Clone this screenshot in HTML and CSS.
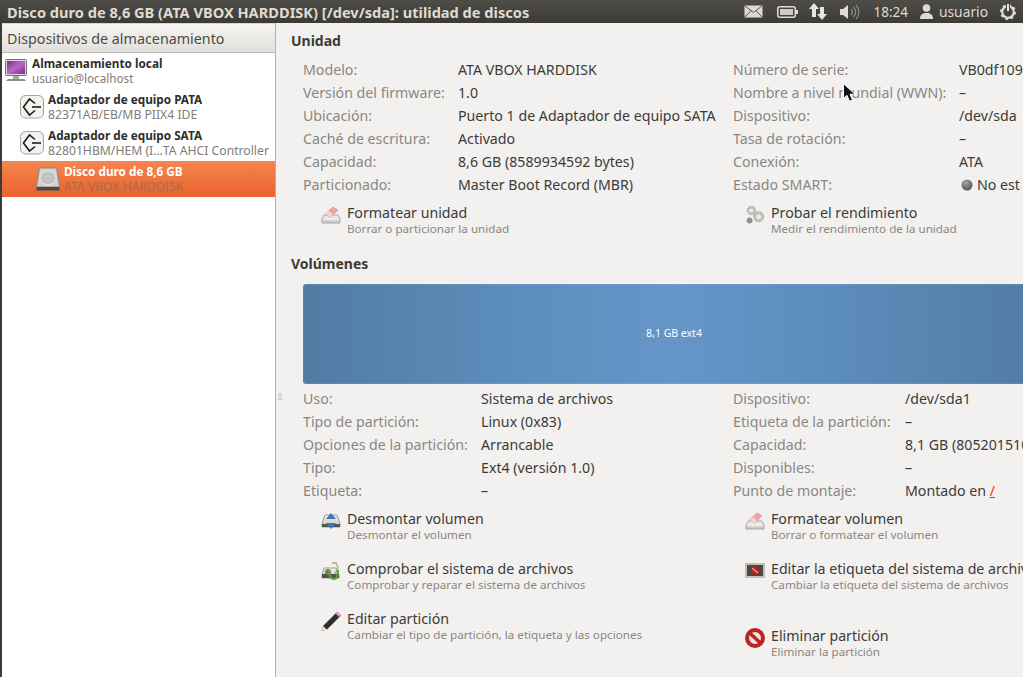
FILE: index.html
```html
<!DOCTYPE html>
<html lang="es">
<head>
<meta charset="utf-8">
<title>Utilidad de discos</title>
<link rel="stylesheet" href="styles.css">
</head>
<body>
<svg class="defs" width="0" height="0" aria-hidden="true">
  <defs>
    <linearGradient id="drive" x1="0" y1="0" x2="0" y2="1"><stop offset="0" stop-color="#f2f2f0"/><stop offset="1" stop-color="#c4c4c0"/></linearGradient>
    <linearGradient id="screen" x1="0" y1="0" x2="1" y2="1"><stop offset="0" stop-color="#7a2f8f"/><stop offset=".5" stop-color="#b868c4"/><stop offset="1" stop-color="#7c2f86"/></linearGradient>
    <radialGradient id="ball" cx=".4" cy=".3" r=".8"><stop offset="0" stop-color="#a5a5a3"/><stop offset="1" stop-color="#4c4c4a"/></radialGradient>
    <symbol id="adapter" viewBox="0 0 24 24">
      <rect x=".5" y=".5" width="23" height="22.500" rx="5" fill="#f3f2ef" stroke="#a3a19c"/>
      <path d="M15 8.500 9.500 4 3.500 12l6 8 5.500-4.500" fill="none" stroke="#1c1c1a" stroke-width="1.600"/>
      <path d="M12 12h9" fill="none" stroke="#1c1c1a" stroke-width="1.600"/>
    </symbol>
    <symbol id="erase" viewBox="0 0 20 20">
      <path d="M3 10h14l2 4v4H1v-4z" fill="url(#drive)" stroke="#a8a8a4"/>
      <path d="M2 14h16" stroke="#fff"/>
      <path d="M4 9l8-7 5 3-7 7z" fill="#eda5a5" stroke="#d78b8b" stroke-width=".6"/>
      <path d="M4 9l3-3 5 3-2 3z" fill="#f5d5d3"/>
    </symbol>
  </defs>
</svg>

<div class="app">
  <header class="topbar">
    <div class="win-title">Disco duro de 8,6 GB (ATA VBOX HARDDISK) [/dev/sda]: utilidad de discos</div>
    <div class="indicators">
      <svg class="ind-mail" width="19" height="13" viewBox="0 0 19 13"><rect x=".5" y=".5" width="18" height="12" fill="#dfdbd2"/><path d="M.5.5l9 7 9-7M.5 12.5l6.500-7M18.500 12.500l-6.500-7" fill="none" stroke="#55534d"/></svg>
      <svg class="ind-batt" width="21" height="12" viewBox="0 0 21 12"><rect x=".75" y=".75" width="17.500" height="10.500" rx="2" fill="none" stroke="#dfdbd2" stroke-width="1.500"/><rect x="3" y="3" width="13" height="6" fill="#cfcbc2"/><rect x="19" y="4" width="2" height="4" fill="#dfdbd2"/></svg>
      <svg class="ind-net" width="18" height="18" viewBox="0 0 18 18"><path d="M5 0l5 6H7v8H3V6H0zM13 17l5-6h-3V4h-4v7H8z" fill="#e8e5de"/></svg>
      <svg class="ind-vol" width="20" height="16" viewBox="0 0 20 16"><path d="M0 5h3l5-4v14l-5-4H0z" fill="#dfdbd2"/><path d="M11 5a4 4 0 0 1 0 6M13.500 3a7 7 0 0 1 0 10M16 1a10 10 0 0 1 0 14" fill="none" stroke="#8f8c85" stroke-width="1.300"/></svg>
      <span class="clock">18:24</span>
      <span class="user">
        <svg width="13" height="15" viewBox="0 0 13 15"><circle cx="6.500" cy="4" r="3.800" fill="#dfdbd2"/><path d="M0 15c0-4 2-5 4.500-6h4C11 10 13 11 13 15z" fill="#dfdbd2"/></svg>
        <span>usuario</span>
      </span>
      <svg class="ind-power" width="16" height="16" viewBox="0 0 16 16"><circle cx="8" cy="8" r="5.800" fill="none" stroke="#dfdbd2" stroke-width="2.200"/><circle cx="8" cy="8" r="7" fill="none" stroke="#dfdbd2" stroke-width="2" stroke-dasharray="2.500 3"/><path d="M8 0v7" stroke="#44433e" stroke-width="4"/><path d="M8 0v7" stroke="#e8e5de" stroke-width="2"/></svg>
    </div>
  </header>

  <div class="content">
    <aside class="sidebar">
      <div class="side-head">Dispositivos de almacenamiento</div>
      <ul class="tree">
        <li class="node level0">
          <svg class="node-icon" width="22" height="24" viewBox="0 0 22 24"><rect x=".5" y=".5" width="21" height="16" rx="1" fill="#d8d8d5" stroke="#74746f"/><rect x="2" y="2" width="18" height="13" fill="url(#screen)"/><path d="M8 17h6v3H8z" fill="#a5a5a2"/><path d="M3 20h16l2 2H1z" fill="#8d8d89"/></svg>
          <div class="node-text"><b>Almacenamiento local</b><span>usuario@localhost</span></div>
        </li>
        <li class="node level1">
          <svg class="node-icon" width="24" height="24"><use href="#adapter"/></svg>
          <div class="node-text"><b>Adaptador de equipo PATA</b><span>82371AB/EB/MB PIIX4 IDE</span></div>
        </li>
        <li class="node level1">
          <svg class="node-icon" width="24" height="24"><use href="#adapter"/></svg>
          <div class="node-text"><b>Adaptador de equipo SATA</b><span>82801HBM/HEM (I…TA AHCI Controller</span></div>
        </li>
        <li class="node level2 selected">
          <svg class="node-icon" width="24" height="24" viewBox="0 0 24 24"><path d="M3.500 1h17l3 19H.5z" fill="#d2d2ce" stroke="#8a8a85"/><ellipse cx="12" cy="11" rx="8" ry="7" fill="#c2c2be" stroke="#e9e9e6"/><circle cx="12" cy="11" r="1.800" fill="#a8a8a4" stroke="#e6e6e3" stroke-width=".7"/><path d="M.5 20h23v3.500H.5z" fill="#4a4a47"/></svg>
          <div class="node-text"><b>Disco duro de 8,6 GB</b><span>ATA VBOX HARDDISK</span></div>
        </li>
      </ul>
    </aside>

    <main class="main">
      <div class="grip"></div>

      <section class="drive-sec">
        <h2>Unidad</h2>
        <dl class="props props-drive">
          <dt>Modelo:</dt><dd>ATA VBOX HARDDISK</dd>
          <dt>Número de serie:</dt><dd>VB0df109</dd>
          <dt>Versión del firmware:</dt><dd>1.0</dd>
          <dt>Nombre a nivel mundial (WWN):</dt><dd>–</dd>
          <dt>Ubicación:</dt><dd>Puerto 1 de Adaptador de equipo SATA</dd>
          <dt>Dispositivo:</dt><dd>/dev/sda</dd>
          <dt>Caché de escritura:</dt><dd>Activado</dd>
          <dt>Tasa de rotación:</dt><dd>–</dd>
          <dt>Capacidad:</dt><dd>8,6 GB (8589934592 bytes)</dd>
          <dt>Conexión:</dt><dd>ATA</dd>
          <dt>Particionado:</dt><dd>Master Boot Record (MBR)</dd>
          <dt>Estado SMART:</dt><dd class="smart"><svg width="12" height="12" viewBox="0 0 12 12"><circle cx="6" cy="6" r="5.500" fill="url(#ball)"/></svg>No est</dd>
        </dl>
        <div class="actions actions-drive">
          <div class="action">
            <svg width="20" height="20"><use href="#erase"/></svg>
            <div class="action-text"><b>Formatear unidad</b><span>Borrar o particionar la unidad</span></div>
          </div>
          <div class="action">
            <svg width="20" height="20" viewBox="0 0 22 22"><g fill="#c4c4c0" stroke="#9a9a96"><circle cx="7" cy="6" r="4.500" stroke-dasharray="2 1"/><circle cx="15" cy="13" r="5.500" stroke-dasharray="2 1"/><circle cx="5" cy="17" r="3" stroke-dasharray="1.500 1" fill="#8e8e8a"/></g><circle cx="7" cy="6" r="2" fill="#eee"/><circle cx="15" cy="13" r="2.500" fill="#eee"/></svg>
            <div class="action-text"><b>Probar el rendimiento</b><span>Medir el rendimiento de la unidad</span></div>
          </div>
        </div>
      </section>

      <section class="vol-sec">
        <h2>Volúmenes</h2>
        <div class="volume-bar">8,1 GB ext4</div>
        <dl class="props props-vol">
          <dt>Uso:</dt><dd>Sistema de archivos</dd>
          <dt>Dispositivo:</dt><dd>/dev/sda1</dd>
          <dt>Tipo de partición:</dt><dd>Linux (0x83)</dd>
          <dt>Etiqueta de la partición:</dt><dd>–</dd>
          <dt>Opciones de la partición:</dt><dd>Arrancable</dd>
          <dt>Capacidad:</dt><dd>8,1 GB (8052015104 bytes)</dd>
          <dt>Tipo:</dt><dd>Ext4 (versión 1.0)</dd>
          <dt>Disponibles:</dt><dd>–</dd>
          <dt>Etiqueta:</dt><dd>–</dd>
          <dt>Punto de montaje:</dt><dd>Montado en <a class="mount" href="#">/</a></dd>
        </dl>
        <div class="actions actions-vol">
          <div class="action">
            <svg width="20" height="20" viewBox="0 0 20 20"><path d="M4 4h12l3 9v3H1v-3z" fill="url(#drive)" stroke="#9c9c98"/><path d="M1 13h18v3H1z" fill="#55554f"/><path d="M10 2l5 6H5zM10 18l5-6H5z" fill="#3b78bd"/></svg>
            <div class="action-text"><b>Desmontar volumen</b><span>Desmontar el volumen</span></div>
          </div>
          <div class="action">
            <svg width="20" height="20"><use href="#erase"/></svg>
            <div class="action-text"><b>Formatear volumen</b><span>Borrar o formatear el volumen</span></div>
          </div>
          <div class="action">
            <svg width="20" height="20" viewBox="0 0 20 20"><path d="M3 7h12l3 7v3H1v-3z" fill="url(#drive)" stroke="#9c9c98"/><path d="M1 13h17v4H1z" fill="#55554f"/><circle cx="7" cy="11" r="3" fill="#77776f"/><path d="M11 2h4l2 5-3 6" fill="none" stroke="#b9a883" stroke-width="1.500"/><path d="M8 9c0 6 2 9 5 9s4-4 4-9" fill="none" stroke="#5ba632" stroke-width="2"/></svg>
            <div class="action-text"><b>Comprobar el sistema de archivos</b><span>Comprobar y reparar el sistema de archivos</span></div>
          </div>
          <div class="action">
            <svg class="label-icon" width="20" height="15" viewBox="0 0 20 15"><rect x="1" y="1" width="18" height="13" fill="#484846" stroke="#c0c0bc" stroke-width="2"/><circle cx="10" cy="7.500" r="4.500" fill="#b5201e"/><path d="M7 5l6 5" stroke="#e8a09e" stroke-width="1.400"/></svg>
            <div class="action-text"><b>Editar la etiqueta del sistema de archivos</b><span>Cambiar la etiqueta del sistema de archivos</span></div>
          </div>
          <div class="action">
            <svg width="20" height="20" viewBox="0 0 20 20"><path d="M.5 20l1.500-5 14-14 4 3.500-14 14z" fill="#2e2e2c"/><path d="M.500 20l1.500-5 4 3.500z" fill="#efe3a8"/><path d="M14.500 2.500l2-2 3.500 3.500-2 2z" fill="#dc9ccf"/></svg>
            <div class="action-text"><b>Editar partición</b><span>Cambiar el tipo de partición, la etiqueta y las opciones</span></div>
          </div>
          <div class="action action-low">
            <svg width="20" height="20" viewBox="0 0 20 20"><circle cx="10" cy="10" r="8" fill="#efe2df" stroke="#bf2320" stroke-width="4"/><path d="M4 4.500l12 11" stroke="#c02522" stroke-width="3.500"/></svg>
            <div class="action-text"><b>Eliminar partición</b><span>Eliminar la partición</span></div>
          </div>
        </div>
      </section>

      <svg class="cursor" width="14" height="20" viewBox="0 0 14 20"><path d="M.500.500v15l3.500-3.200 2.500 6 3-1.200-2.500-5.800h5z" fill="#111" stroke="#fff" stroke-width="1"/></svg>
    </main>
  </div>
</div>
</body>
</html>
```

FILE: styles.css
```css
* { box-sizing: border-box; }
html, body { margin: 0; padding: 0; height: 100%; }
body {
  width: 1023px;
  height: 677px;
  overflow: hidden;
  background: #f2f1f0;
  color: #3c3b37;
  font-family: "Noto Sans", "Open Sans", sans-serif;
  font-size: 14.200px;
}
.defs { position: absolute; }
.app { display: flex; flex-direction: column; height: 677px; }

.topbar {
  flex: none;
  height: 23px;
  display: flex;
  align-items: center;
  justify-content: space-between;
  background: linear-gradient(#4e4c46, #3c3b37);
  color: #dfdbd2;
  padding-left: 7px;
}
.win-title { font-weight: 700; font-size: 14.600px; white-space: nowrap; }
.indicators { display: flex; align-items: center; height: 23px; padding-right: 7px; }
.ind-mail { margin-right: 14px; }
.ind-batt { margin-right: 11px; }
.ind-net { margin-right: 13px; }
.ind-vol { margin-right: 13px; }
.clock { font-size: 13.500px; margin-right: 12px; }
.user { display: flex; align-items: center; gap: 6px; font-size: 13.800px; margin-right: 12px; }

.content { flex: 1; display: flex; min-height: 0; }

.sidebar {
  flex: none;
  width: 276px;
  background: #fff;
  border-left: 2px solid #3c3b37;
  border-right: 1px solid #b4b1ac;
}
.side-head {
  height: 30px;
  display: flex;
  align-items: center;
  padding-left: 5px;
  padding-top: 1px;
  font-size: 14.300px;
  color: #4c4b47;
  background: linear-gradient(#f6f5f3, #e2dfdb);
  border-top: 1px solid #d8d5d0;
  border-bottom: 1px solid #bdbab5;
}
.tree { list-style: none; margin: 0; padding: 0; }
.node { height: 36px; display: flex; align-items: center; white-space: nowrap; }
.level0 { padding-left: 3px; }
.level0 .node-icon { margin-right: 5px; }
.level0 .node-text span { font-size: 11.700px; }
.level1 { padding-left: 18px; }
.level1 .node-icon { margin-right: 4px; }
.level2 { padding-left: 34px; }
.level2 .node-icon { margin-right: 4px; }
.node-text { display: flex; flex-direction: column; line-height: 15px; font-size: 12.200px; }
.node-text b { color: #2f2e2b; font-size: 11.750px; }
.node-text span { color: #7f7c77; }
.selected { background: linear-gradient(#f5854f, #e9622d); }
.selected b { color: #fff; }
.selected span { color: #a9694a; }

.main { flex: 1; position: relative; overflow: hidden; padding: 8px 0 0 15px; min-width: 0; }
.grip {
  position: absolute;
  left: 2px;
  top: 370px;
  width: 4px;
  height: 7px;
  background: repeating-linear-gradient(#c9c6c1 0 1px, transparent 1px 2px);
}
h2 { margin: 0; font-size: 14px; font-weight: 700; line-height: 20px; color: #3c3b37; }

.props { margin: 0 0 0 12px; display: grid; grid-auto-rows: 23px; align-items: center; white-space: nowrap; }
.props dt { color: #8a8782; }
.props dd { margin: 0; color: #3c3b37; }
.props-drive { margin-top: 7px; grid-template-columns: 155px 275px 226px 200px; }
.props-vol { margin-top: 3px; grid-template-columns: 178px 252px 172px 300px; }
.smart { display: flex; align-items: center; gap: 4px; padding-left: 2px; }
.mount { color: #e53a0b; }

.actions { margin-left: 30px; display: grid; grid-template-columns: 424px 300px; white-space: nowrap; }
.action { display: flex; align-items: flex-start; gap: 6px; height: 32px; }
.action svg { flex: none; }
.action .label-icon { margin-top: 2px; }
.action-text { display: flex; flex-direction: column; }
.action-text b { font-weight: 400; font-size: 14.200px; line-height: 16px; color: #3c3b37; }
.action-text span { font-size: 11.650px; line-height: 15px; color: #8a8782; }
.actions-drive { margin-top: 9px; }
.actions-vol { margin-top: 9px; row-gap: 18px; }
.action-low { margin-top: 17px; }

.vol-sec { margin-top: 17px; }
.volume-bar {
  width: 742px;
  height: 100px;
  margin: 10px 0 0 12px;
  padding-bottom: 3px;
  display: flex;
  align-items: center;
  justify-content: center;
  border-radius: 3px;
  color: #fff;
  font-size: 10.500px;
  background: linear-gradient(90deg, #527ba3 0%, #5d8ebd 30%, #6696c8 50%, #5c8cbb 72%, #527ba3 100%);
  box-shadow: inset 0 0 0 1px rgba(255, 255, 255, .08);
}
.cursor { position: absolute; left: 567px; top: 60px; }
```
